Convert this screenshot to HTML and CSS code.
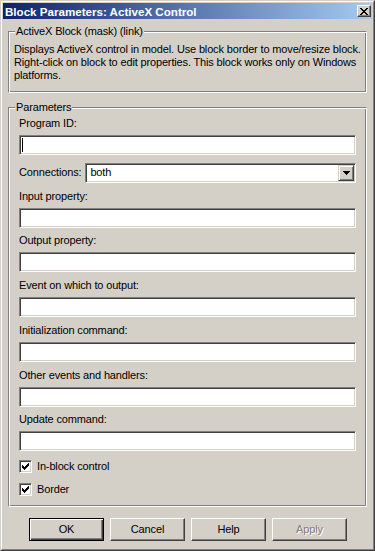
FILE: index.html
```html
<!DOCTYPE html>
<html lang="en">
<head>
    <meta charset="UTF-8">
    <title>Block Parameters: ActiveX Control</title>
    <link rel="stylesheet" href="styles.css">
</head>
<body>
    <div class="window">
        <div class="frame">
            <div class="titlebar">
                <span class="title">Block Parameters: ActiveX Control</span>
                <span class="close-btn">
                    <svg width="8" height="7" viewBox="0 0 8 7" shape-rendering="crispEdges"><path d="M0 0h2v1H0z M6 0h2v1H6z M1 1h2v1H1z M5 1h2v1H5z M2 2h4v1H2z M3 3h2v1H3z M2 4h4v1H2z M1 5h2v1H1z M5 5h2v1H5z M0 6h2v1H0z M6 6h2v1H6z" fill="#000"/></svg>
                </span>
            </div>

            <div class="content">
                <fieldset class="group">
                    <legend>ActiveX Block (mask) (link)</legend>
                    <div class="intro">
                        <p class="desc">Displays ActiveX control in model. Use block border to move/resize block. Right-click on block to edit properties. This block works only on Windows platforms.</p>
                    </div>
                </fieldset>

                <fieldset class="group params-group">
                    <legend>Parameters</legend>
                    <div class="params">
                        <div class="field">
                            <div class="label">Program ID:</div>
                            <div class="edit"><span class="caret"></span></div>
                        </div>
                        <div class="combo-row">
                            <span class="combo-label">Connections:</span>
                            <div class="combo">
                                <span class="combo-text">both</span>
                                <span class="drop-btn">
                                    <svg width="7" height="4" viewBox="0 0 7 4" shape-rendering="crispEdges"><path d="M0 0h7v1H0z M1 1h5v1H1z M2 2h3v1H2z M3 3h1v1H3z" fill="#000"/></svg>
                                </span>
                            </div>
                        </div>
                        <div class="field">
                            <div class="label">Input property:</div>
                            <div class="edit"></div>
                        </div>
                        <div class="field">
                            <div class="label">Output property:</div>
                            <div class="edit"></div>
                        </div>
                        <div class="field">
                            <div class="label">Event on which to output:</div>
                            <div class="edit"></div>
                        </div>
                        <div class="field">
                            <div class="label">Initialization command:</div>
                            <div class="edit"></div>
                        </div>
                        <div class="field">
                            <div class="label">Other events and handlers:</div>
                            <div class="edit"></div>
                        </div>
                        <div class="field">
                            <div class="label">Update command:</div>
                            <div class="edit"></div>
                        </div>
                        <div class="check first-check">
                            <span class="check-box">
                                <svg width="7" height="7" viewBox="0 0 7 7" shape-rendering="crispEdges"><path d="M6 0h1v1H6z M5 1h2v1H5z M0 2h1v1H0z M4 2h3v1H4z M0 3h2v1H0z M3 3h3v1H3z M0 4h5v1H0z M1 5h3v1H1z M2 6h1v1H2z" fill="#000"/></svg>
                            </span>
                            <span>In-block control</span>
                        </div>
                        <div class="check">
                            <span class="check-box">
                                <svg width="7" height="7" viewBox="0 0 7 7" shape-rendering="crispEdges"><path d="M6 0h1v1H6z M5 1h2v1H5z M0 2h1v1H0z M4 2h3v1H4z M0 3h2v1H0z M3 3h3v1H3z M0 4h5v1H0z M1 5h3v1H1z M2 6h1v1H2z" fill="#000"/></svg>
                            </span>
                            <span>Border</span>
                        </div>
                    </div>
                </fieldset>

                <div class="buttons">
                    <div class="btn default">OK</div>
                    <div class="btn">Cancel</div>
                    <div class="btn">Help</div>
                    <div class="btn disabled">Apply</div>
                </div>
            </div>
        </div>
    </div>
</body>
</html>
```

FILE: styles.css
```css
body {
    margin: 0;
    background: #d4d0c8;
    font-family: "Liberation Sans", Arial, sans-serif;
    font-size: 11px;
    line-height: 13px;
    letter-spacing: -0.15px;
    color: #000;
}

.window {
    width: 375px;
    height: 551px;
    box-sizing: border-box;
    border: 1px solid;
    border-color: #d4d0c8 #404040 #404040 #d4d0c8;
}
.frame {
    height: 100%;
    box-sizing: border-box;
    border: 1px solid;
    border-color: #fff #808080 #808080 #fff;
    padding: 1px;
}

.titlebar {
    height: 16px;
    display: flex;
    align-items: center;
    justify-content: space-between;
    padding: 0 1px 0 2px;
    background: linear-gradient(to right, #0a246a, #a6caf0);
}
.title {
    color: #fff;
    font-weight: bold;
    font-size: 11.6px;
    letter-spacing: 0;
}
.close-btn {
    width: 14px;
    height: 12px;
    box-sizing: border-box;
    display: flex;
    align-items: center;
    justify-content: center;
    background: #d4d0c8;
    border: 1px solid;
    border-color: #fff #404040 #404040 #fff;
    box-shadow: inset -1px -1px 0 #808080;
}
.close-btn svg { display: block; }

.content { padding: 0 5px; }

.group {
    margin: 6px 0 0;
    padding: 0;
    min-width: 0;
    border: 1px solid;
    border-color: #808080 #fff #fff #808080;
    box-shadow: inset 1px 1px 0 #fff, inset -1px -1px 0 #808080;
}
.params-group { margin-top: 8px; }
.group legend {
    margin-left: 6px;
    padding: 0 1px;
    line-height: 13px;
    background: #d4d0c8;
}

.intro { padding: 5px 0 10px 5px; }
.desc { margin: 0; }

.params {
    display: flex;
    flex-direction: column;
    gap: 6.75px;
    padding: 3px 10px 10px 10px;
}
.field { display: flex; flex-direction: column; }
.label { margin-bottom: 5px; }

.edit {
    height: 20px;
    box-sizing: border-box;
    background: #fff;
    border: 1px solid;
    border-color: #808080 #fff #fff #808080;
    box-shadow: inset 1px 1px 0 #404040, inset -1px -1px 0 #d4d0c8;
    padding: 3px 0 0 2px;
}
.caret {
    display: block;
    width: 1px;
    height: 14px;
    margin-top: -1px;
    background: #000;
}

.combo-row {
    display: flex;
    align-items: center;
    margin-top: 1px;
}
.combo-label { margin-right: 4px; }
.combo {
    flex: 1;
    height: 20px;
    box-sizing: border-box;
    display: flex;
    align-items: center;
    justify-content: space-between;
    background: #fff;
    border: 1px solid;
    border-color: #808080 #fff #fff #808080;
    box-shadow: inset 1px 1px 0 #404040, inset -1px -1px 0 #d4d0c8;
    padding: 1px;
}
.combo-text { padding-left: 3px; }
.drop-btn {
    width: 16px;
    height: 16px;
    box-sizing: border-box;
    display: flex;
    align-items: center;
    justify-content: center;
    background: #d4d0c8;
    border: 1px solid;
    border-color: #d4d0c8 #404040 #404040 #d4d0c8;
    box-shadow: inset 1px 1px 0 #fff, inset -1px -1px 0 #808080;
}
.drop-btn svg { display: block; }

.check {
    display: flex;
    align-items: center;
    gap: 5px;
    margin-top: 3.25px;
}
.first-check { margin-top: 1.5px; }
.check-box {
    width: 13px;
    height: 13px;
    box-sizing: border-box;
    display: flex;
    align-items: center;
    justify-content: center;
    background: #fff;
    border: 1px solid;
    border-color: #808080 #fff #fff #808080;
    box-shadow: inset 1px 1px 0 #404040, inset -1px -1px 0 #d4d0c8;
}
.check-box svg { display: block; }

.buttons {
    display: flex;
    justify-content: center;
    gap: 6px;
    margin-top: 11px;
    padding-left: 1px;
}
.btn {
    width: 75px;
    height: 23px;
    box-sizing: border-box;
    display: flex;
    align-items: center;
    justify-content: center;
    border: 1px solid;
    border-color: #fff #404040 #404040 #fff;
    box-shadow: inset -1px -1px 0 #808080;
}
.btn.default {
    border-color: #000;
    box-shadow: inset 1px 1px 0 #fff, inset -1px -1px 0 #404040, inset -2px -2px 0 #808080;
}
.btn.disabled {
    color: #808080;
    text-shadow: 1px 1px 0 #fff;
}
```
